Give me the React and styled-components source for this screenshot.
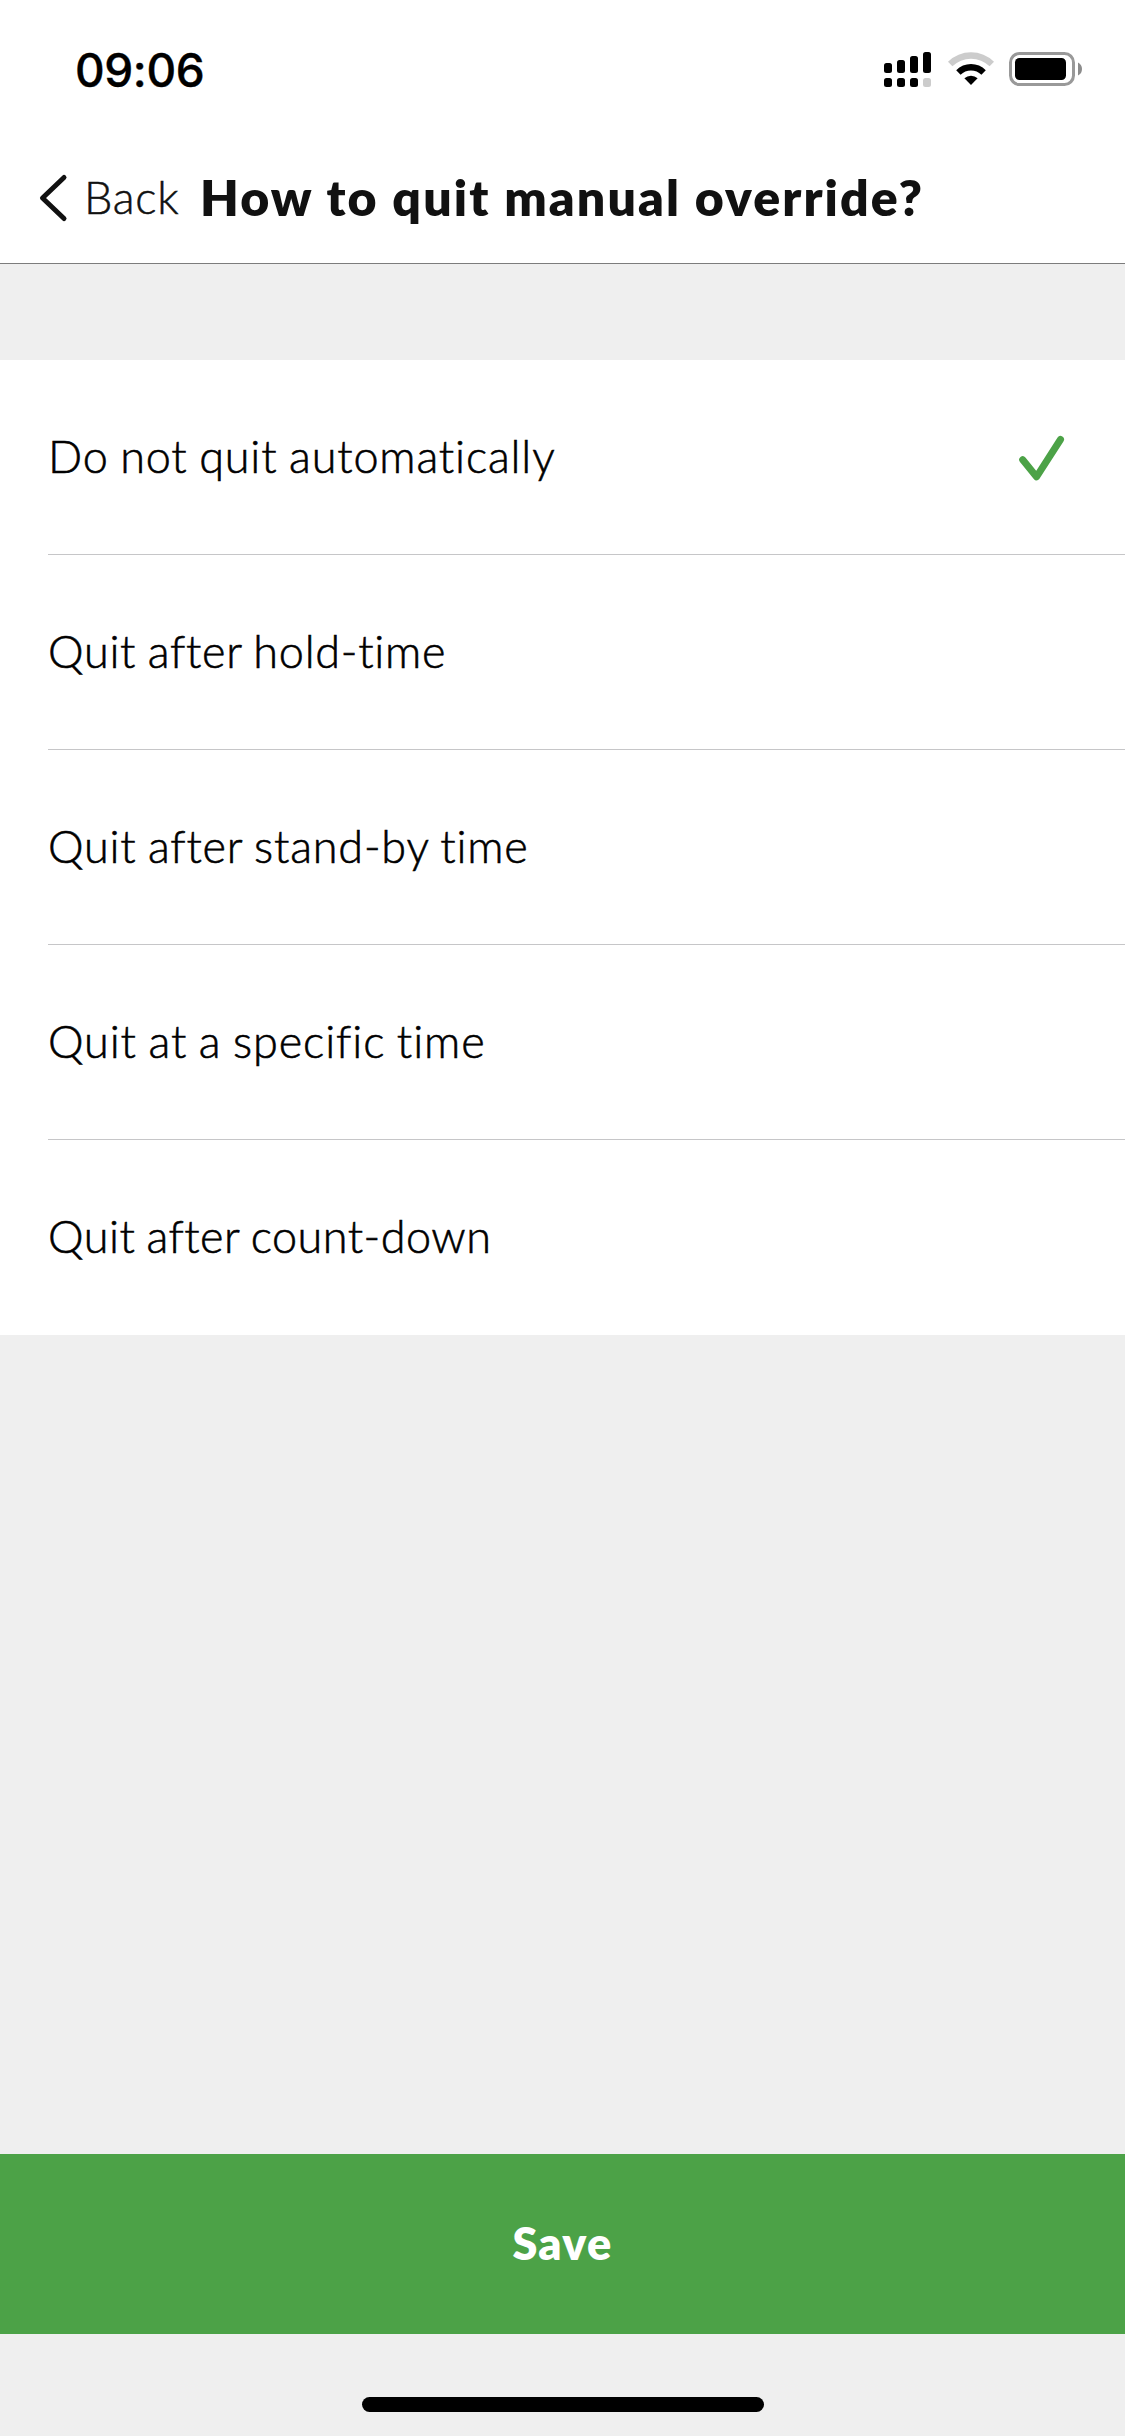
import React, { useState } from "react";
import styled, { createGlobalStyle } from "styled-components";

const GlobalStyle = createGlobalStyle`
  * { box-sizing: border-box; }
  body { margin: 0; background: #efefef; }
`;

const Screen = styled.div`
  display: flex;
  flex-direction: column;
  width: 1125px;
  height: 2436px;
  background: #efefef;
  font-family: Lato, "Liberation Sans", sans-serif;
`;

const StatusBar = styled.div`
  display: flex;
  align-items: center;
  justify-content: space-between;
  height: 128px;
  padding: 11px 42px 0 75px;
  background: #fff;
`;

const Clock = styled.time`
  font: 500 46px/56px Inter, sans-serif;
  letter-spacing: -0.4px;
  -webkit-text-stroke: 0.4px currentColor;
  color: #000;
`;

const StatusIcons = styled.div`
  display: flex;
  align-items: center;
  svg { display: block; }
`;

const Header = styled.header`
  display: flex;
  align-items: center;
  height: 136px;
  padding: 2px 0 0 36px;
  background: #fff;
  border-bottom: 1px solid #7c7c7c;
  color: #111;
`;

const BackButton = styled.button`
  display: flex;
  align-items: center;
  gap: 14px;
  width: 164px;
  padding: 0;
  border: 0;
  background: none;
  color: inherit;
  font: 300 45px/54px Lato, sans-serif;
  letter-spacing: 0.7px;
  -webkit-text-stroke: 0.5px currentColor;
  white-space: nowrap;
`;

const Title = styled.h1`
  margin: 0;
  font-size: 50px;
  line-height: 60px;
  font-weight: 800;
  letter-spacing: 2.1px;
  white-space: nowrap;
`;

const OptionList = styled.ul`
  margin: 96px 0 0;
  padding: 0 0 0 48px;
  list-style: none;
  background: #fff;
`;

const Option = styled.li`
  display: flex;
  align-items: center;
  justify-content: space-between;
  height: 195px;
  padding: 2px 60px 0 0;
  border-bottom: 1px solid #c6c6c8;
  cursor: pointer;

  &:last-child { border-bottom-color: transparent; }
`;

const OptionLabel = styled.span`
  padding-bottom: 4px;
  font-size: 45px;
  line-height: 54px;
  font-weight: 300;
  letter-spacing: ${(p) => p.$tracking}px;
  word-spacing: -1.5px;
  -webkit-text-stroke: 0.6px currentColor;
  color: #000;
  white-space: nowrap;
`;

const SaveButton = styled.button`
  height: 180px;
  margin-top: auto;
  padding: 0 0 3px;
  border: 0;
  background: #4ca247;
  color: #fff;
  font: 800 45px/54px Lato, sans-serif;
  letter-spacing: 1.3px;
`;

const HomeArea = styled.footer`
  display: flex;
  justify-content: center;
  align-items: flex-end;
  height: 102px;
  padding-bottom: 24px;
`;

const HomeIndicator = styled.div`
  width: 402px;
  height: 15px;
  border-radius: 8px;
  background: #000;
`;

const SignalIcon = () => (
  <svg width="47" height="35" viewBox="0 0 47 35">
    <rect x="0" y="11" width="8" height="10" rx="2.5" />
    <rect x="13" y="8" width="8" height="13" rx="2.5" />
    <rect x="26" y="4" width="8" height="17" rx="2.5" />
    <rect x="39" y="0" width="8" height="21" rx="2.5" />
    <rect x="0" y="26" width="8" height="9" rx="2.5" />
    <rect x="13" y="26" width="8" height="9" rx="2.5" />
    <rect x="26" y="26" width="8" height="9" rx="2.5" />
    <rect x="39" y="26" width="8" height="9" rx="2.5" fill="#ccc" />
  </svg>
);

const WifiIcon = () => (
  <svg width="78" height="35" viewBox="0 0 78 35">
    <path d="M17 9.7A33 33 0 0 1 63 9.7L58.6 14.3A26.5 26.5 0 0 0 21.4 14.3Z" fill="#ccc" />
    <path d="M25.2 18.2A20.8 20.8 0 0 1 54.8 18.2L50.4 22.7A14.7 14.7 0 0 0 29.6 22.7Z" />
    <path d="M33.4 26.3A9.5 9.5 0 0 1 46.6 26.3L40 33Z" />
  </svg>
);

const BatteryIcon = () => (
  <svg width="74" height="35" viewBox="0 0 74 35">
    <rect x="1.5" y="1.5" width="63" height="31" rx="9" fill="none" stroke="#999" strokeWidth="3" />
    <rect x="6" y="6" width="51" height="22" rx="4.5" />
    <path d="M69 10.5Q73 12.5 73 17T69 23.5Z" fill="#8c8c8c" />
  </svg>
);

const BackIcon = () => (
  <svg width="34" height="54" viewBox="0 0 34 54">
    <path
      d="M28 7.5L6.5 28L28 48.5"
      fill="none"
      stroke="#111"
      strokeWidth="5"
      strokeLinecap="round"
      strokeLinejoin="round"
    />
  </svg>
);

const CheckIcon = () => (
  <svg width="46" height="46" viewBox="0 0 46 46">
    <path
      d="M3.7 24.8L17.5 41.8L41.5 4.5"
      fill="none"
      stroke="#4ca247"
      strokeWidth="7"
      strokeLinecap="round"
      strokeLinejoin="round"
    />
  </svg>
);

const options = [
  { label: "Do not quit automatically", tracking: 0.84 },
  { label: "Quit after hold-time", tracking: 0.72 },
  { label: "Quit after stand-by time", tracking: 0.79 },
  { label: "Quit at a specific time", tracking: 0.88 },
  { label: "Quit after count-down", tracking: 0.48 },
];

export default function App() {
  const [selected, setSelected] = useState(0);

  return (
    <>
      <GlobalStyle />
      <Screen>
        <StatusBar>
          <Clock>09:06</Clock>
          <StatusIcons>
            <SignalIcon />
            <WifiIcon />
            <BatteryIcon />
          </StatusIcons>
        </StatusBar>
        <Header>
          <BackButton>
            <BackIcon />
            Back
          </BackButton>
          <Title>How to quit manual override?</Title>
        </Header>
        <OptionList>
          {options.map((option, index) => (
            <Option key={option.label} onClick={() => setSelected(index)}>
              <OptionLabel $tracking={option.tracking}>{option.label}</OptionLabel>
              {index === selected && <CheckIcon />}
            </Option>
          ))}
        </OptionList>
        <SaveButton>Save</SaveButton>
        <HomeArea>
          <HomeIndicator />
        </HomeArea>
      </Screen>
    </>
  );
}
